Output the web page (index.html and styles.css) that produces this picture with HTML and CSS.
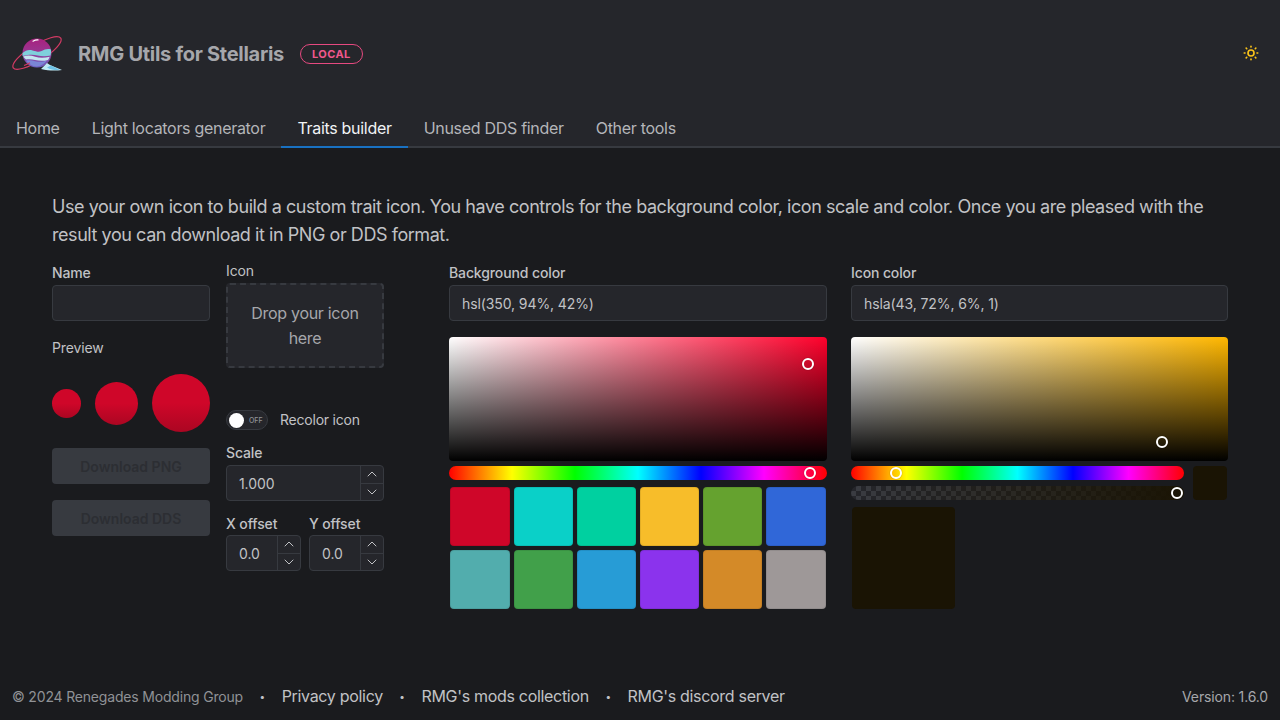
FILE: index.html
```html
<!DOCTYPE html>
<html lang="en">
<head>
    <meta charset="UTF-8">
    <meta name="viewport" content="width=device-width, initial-scale=1.0">
    <title>RMG Utils for Stellaris</title>
    <link rel="stylesheet" href="styles.css">
</head>
<body>
    <header class="header">
        <div class="brand-row">
            <div class="brand">
                <svg class="logo" width="52" height="36" viewBox="0 0 52 36" fill="none">
                    <defs>
                        <linearGradient id="planet" x1="0" y1="0" x2="0" y2="1">
                            <stop offset="0" stop-color="#a8217f"/>
                            <stop offset="0.45" stop-color="#9a3590"/>
                            <stop offset="1" stop-color="#6d62c4"/>
                        </linearGradient>
                    </defs>
                    <ellipse cx="25" cy="17" rx="28" ry="8" transform="rotate(-32 25 17)" stroke="#d43a64" stroke-width="1.200"/>
                    <circle cx="25" cy="17" r="14.500" fill="url(#planet)"/>
                    <path d="M10.600 17c3-2.500 6-3.500 10-2.500s6 2 9 .5 6-2.500 9.300-1.500c.3 2 .2 4-.3 6-4 1-9 1-13 0s-9-1-15 .5c-.2-1-.1-2 0-3z" fill="#7fd0dc"/>
                    <path d="M11.200 20.500c4-1.500 8-1 12 .2s9 1.300 14.500 0c-.4 1.200-1 2.300-1.700 3.300-4 1.200-9 1-13 0-3-.8-6-1-9-.5-1-1-2.200-1.800-2.800-3z" fill="#c4e6f0"/>
                    <path d="M14 24.800c3-.8 6-.4 9 .4s8 1 12-.6c-2.500 3-6 5.900-10.500 5.900-4 0-8-2.500-10.500-5.700z" fill="#7a86d6"/>
                    <path d="M21 5.200c1.500-.9 3.500-1.400 5-1.300" stroke="#fff" stroke-width="1.200" stroke-linecap="round"/>
                    <path d="M12 29.500c2-.8 4.500-2 6-2.800" stroke="#d43a64" stroke-width="1.200"/>
                    <path d="M29 33l6-6 3 2 12 5c-6 .8-13 1-21-1z" fill="#bfeaf5"/>
                    <path d="M35 31.500l4-2 9 4.500c-4 .3-9 0-13-2.500z" fill="#6fc3e6"/>
                </svg>
                <span class="title">RMG Utils for Stellaris</span>
                <span class="badge">Local</span>
            </div>
            <svg class="theme-icon" width="18" height="18" viewBox="0 0 24 24" fill="none" stroke="#fcc419" stroke-width="2.200" stroke-linecap="round" stroke-linejoin="round">
                <circle cx="12" cy="12" r="4"/>
                <path d="M3 12h1m8 -9v1m8 8h1m-9 8v1m-6.400 -15.400l.7 .7m12.100 -.7l-.7 .7m0 11.400l.7 .7m-12.100 -.7l-.7 .7"/>
            </svg>
        </div>
        <nav class="tabs">
            <a class="tab">Home</a>
            <a class="tab">Light locators generator</a>
            <a class="tab active">Traits builder</a>
            <a class="tab">Unused DDS finder</a>
            <a class="tab">Other tools</a>
        </nav>
    </header>

    <main class="main">
        <p class="intro">Use your own icon to build a custom trait icon. You have controls for the background color, icon scale and color. Once you are pleased with the result you can download it in PNG or DDS format.</p>

        <div class="builder">
            <div class="col col-left">
                <label class="label">Name</label>
                <input class="input" type="text">
                <div class="label label-plain preview-label">Preview</div>
                <div class="preview">
                    <div class="dot dot-s"></div>
                    <div class="dot dot-m"></div>
                    <div class="dot dot-l"></div>
                </div>
                <button class="btn" disabled>Download PNG</button>
                <button class="btn" disabled>Download DDS</button>
            </div>

            <div class="col col-icon">
                <label class="label label-plain">Icon</label>
                <div class="dropzone">Drop your icon here</div>
                <div class="switch-row">
                    <div class="switch"><span class="knob"></span><span class="switch-text">OFF</span></div>
                    <span class="switch-label">Recolor icon</span>
                </div>
                <label class="label scale-label">Scale</label>
                <div class="number">
                    <input class="number-input" type="text" value="1.000">
                    <div class="stepper">
                        <span class="step"><svg width="16" height="16" viewBox="0 0 24 24" class="chev"><path d="M6 15l6-6 6 6"/></svg></span>
                        <span class="step"><svg width="16" height="16" viewBox="0 0 24 24" class="chev"><path d="M6 9l6 6 6-6"/></svg></span>
                    </div>
                </div>
                <div class="offsets">
                    <div class="offset">
                        <label class="label">X offset</label>
                        <div class="number">
                            <input class="number-input" type="text" value="0.0">
                            <div class="stepper">
                                <span class="step"><svg width="16" height="16" viewBox="0 0 24 24" class="chev"><path d="M6 15l6-6 6 6"/></svg></span>
                                <span class="step"><svg width="16" height="16" viewBox="0 0 24 24" class="chev"><path d="M6 9l6 6 6-6"/></svg></span>
                            </div>
                        </div>
                    </div>
                    <div class="offset">
                        <label class="label">Y offset</label>
                        <div class="number">
                            <input class="number-input" type="text" value="0.0">
                            <div class="stepper">
                                <span class="step"><svg width="16" height="16" viewBox="0 0 24 24" class="chev"><path d="M6 15l6-6 6 6"/></svg></span>
                                <span class="step"><svg width="16" height="16" viewBox="0 0 24 24" class="chev"><path d="M6 9l6 6 6-6"/></svg></span>
                            </div>
                        </div>
                    </div>
                </div>
            </div>

            <div class="col col-color">
                <label class="label">Background color</label>
                <input class="input" type="text" value="hsl(350, 94%, 42%)">
                <div class="saturation sat-red"><span class="thumb thumb-bg-sat"></span></div>
                <div class="hue"><span class="thumb thumb-bg-hue"></span></div>
                <div class="swatches">
                    <div class="swatch s1"></div>
                    <div class="swatch s2"></div>
                    <div class="swatch s3"></div>
                    <div class="swatch s4"></div>
                    <div class="swatch s5"></div>
                    <div class="swatch s6"></div>
                    <div class="swatch s7"></div>
                    <div class="swatch s8"></div>
                    <div class="swatch s9"></div>
                    <div class="swatch s10"></div>
                    <div class="swatch s11"></div>
                    <div class="swatch s12"></div>
                </div>
            </div>

            <div class="col col-color">
                <label class="label">Icon color</label>
                <input class="input" type="text" value="hsla(43, 72%, 6%, 1)">
                <div class="saturation sat-gold"><span class="thumb thumb-icon-sat"></span></div>
                <div class="slider-row">
                    <div class="sliders">
                        <div class="hue"><span class="thumb thumb-icon-hue"></span></div>
                        <div class="alpha"><span class="thumb thumb-icon-alpha"></span></div>
                    </div>
                    <div class="current"></div>
                </div>
                <div class="icon-swatch"></div>
            </div>
        </div>
    </main>

    <footer class="footer">
        <div class="footer-links">
            <span class="copy">© 2024 Renegades Modding Group</span>
            <span class="sep">•</span>
            <a class="link">Privacy policy</a>
            <span class="sep">•</span>
            <a class="link">RMG's mods collection</a>
            <span class="sep">•</span>
            <a class="link">RMG's discord server</a>
        </div>
        <span class="version">Version: 1.6.0</span>
    </footer>
</body>
</html>
```

FILE: styles.css
```css
* {
    box-sizing: border-box;
}
body {
    font-family: Inter, "Liberation Sans", sans-serif;
    background-color: #1a1b1e;
    color: #c1c2c5;
    display: flex;
    flex-direction: column;
    height: 100vh;
    margin: 0;
    overflow: hidden;
}

/* header */
.header {
    background-color: #25262b;
    height: 148px;
    flex-shrink: 0;
    display: flex;
    flex-direction: column;
    justify-content: space-between;
}
.brand-row {
    display: flex;
    justify-content: space-between;
    align-items: center;
    padding: 36px 20px 0 12px;
}
.brand {
    display: flex;
    align-items: center;
}
.logo {
    margin-right: 14px;
}
.theme-icon {
    margin-bottom: 2px;
}
.title {
    font-size: 20px;
    font-weight: 700;
    letter-spacing: -0.28px;
    color: #a6a7ab;
}
.badge {
    margin-left: 16px;
    height: 20px;
    padding: 0 11px;
    display: flex;
    align-items: center;
    border: 1px solid #e64980;
    border-radius: 20px;
    color: #f0588c;
    font-size: 11px;
    font-weight: 700;
    letter-spacing: 0.4px;
    text-transform: uppercase;
}
.tabs {
    display: flex;
    border-bottom: 2px solid #373a40;
}
.tab {
    padding: 0 16px;
    height: 38px;
    margin-bottom: -2px;
    font-size: 16px;
    line-height: 36px;
    letter-spacing: -0.3px;
    color: #b4b5b9;
    border-bottom: 2px solid transparent;
}
.tab.active {
    color: #f1f3f5;
    border-bottom-color: #1971c2;
}

/* main */
.main {
    flex: 1;
    padding: 45px 52px 0;
}
.intro {
    margin: 0 0 11px;
    font-size: 18px;
    line-height: 28px;
    letter-spacing: -0.44px;
}
.builder {
    display: flex;
}
.col {
    display: flex;
    flex-direction: column;
}
.col-left {
    width: 158px;
    padding-top: 2px;
}
.col-icon {
    width: 158px;
    margin-left: 16px;
}
.col-color {
    width: 378px;
    margin-left: 24px;
    padding-top: 2px;
}
.col-icon + .col-color {
    margin-left: 65px;
}
.label {
    font-size: 14px;
    line-height: 22px;
    font-weight: 450;
    letter-spacing: -0.12px;
    margin-bottom: 1px;
}
.label-plain {
    font-weight: 400;
}
.input {
    height: 36px;
    width: 100%;
    padding: 0 12px;
    background-color: #25262b;
    border: 1px solid #373a40;
    border-radius: 4px;
    color: #c1c2c5;
    font-family: inherit;
    font-size: 14px;
    letter-spacing: -0.1px;
}
.preview-label {
    margin-top: 16px;
}
.preview {
    display: flex;
    align-items: center;
    gap: 14px;
    margin-top: 14px;
    height: 58px;
}
.dot {
    border-radius: 50%;
    background: linear-gradient(180deg, #cf0629 50%, #ab0622 100%);
}
.dot-s {
    width: 29px;
    height: 29px;
}
.dot-m {
    width: 43px;
    height: 43px;
}
.dot-l {
    width: 58px;
    height: 58px;
}
.btn {
    height: 36px;
    margin-top: 16px;
    background-color: #373a40;
    color: #2c2e33;
    border: none;
    border-radius: 4px;
    font-family: inherit;
    font-size: 14px;
    font-weight: 600;
}

.dropzone {
    height: 85px;
    padding: 0 16px;
    display: flex;
    align-items: center;
    justify-content: center;
    text-align: center;
    background-color: #25262b;
    border: 2px dashed #373a40;
    border-radius: 4px;
    font-size: 16px;
    line-height: 25px;
    letter-spacing: -0.3px;
    color: #a6a7ab;
}
.switch-row {
    display: flex;
    align-items: center;
    height: 20px;
    margin-top: 42px;
}
.switch {
    width: 42px;
    height: 20px;
    display: flex;
    align-items: center;
    padding-left: 2px;
    background-color: #25262b;
    border: 1px solid #373a40;
    border-radius: 20px;
}
.knob {
    width: 15px;
    height: 15px;
    border-radius: 50%;
    background-color: #fff;
}
.switch-text {
    margin-left: 5px;
    font-size: 7px;
    font-weight: 500;
    color: #909296;
}
.switch-label {
    margin-left: 12px;
    font-size: 14px;
    line-height: 18px;
    letter-spacing: -0.22px;
    padding-bottom: 1px;
}
.scale-label {
    margin-top: 12px;
}
.number {
    height: 36px;
    display: flex;
    background-color: #25262b;
    border: 1px solid #373a40;
    border-radius: 4px;
}
.number-input {
    flex: 1;
    min-width: 0;
    padding: 0 12px;
    background: none;
    border: none;
    color: #c1c2c5;
    font-family: inherit;
    font-size: 14px;
    letter-spacing: -0.1px;
}
.stepper {
    width: 23px;
    flex-shrink: 0;
    display: flex;
    flex-direction: column;
    border-left: 1px solid #373a40;
}
.step {
    flex: 1;
    display: flex;
    align-items: center;
    justify-content: center;
}
.step + .step {
    border-top: 1px solid #373a40;
}
.chev {
    fill: none;
    stroke: #c1c2c5;
    stroke-width: 1.500;
    stroke-linecap: round;
    stroke-linejoin: round;
}
.offsets {
    display: flex;
    gap: 8px;
    margin-top: 12px;
}
.offset {
    width: 75px;
}

/* color pickers */
.saturation {
    position: relative;
    height: 124px;
    margin-top: 16px;
    border-radius: 4px;
}
.sat-red {
    background: linear-gradient(180deg, transparent, #000), linear-gradient(90deg, #fff, #ff002b);
}
.sat-gold {
    background: linear-gradient(180deg, transparent, #000), linear-gradient(90deg, #fff, #ffb700);
}
.hue {
    position: relative;
    height: 14px;
    border-radius: 7px;
    background: linear-gradient(90deg, #f00, #ff0 16.66%, #0f0 33.33%, #0ff 50%, #00f 66.66%, #f0f 83.33%, #f00);
}
.col-color > .hue {
    margin-top: 5px;
}
.thumb {
    position: absolute;
    width: 12px;
    height: 12px;
    margin: -6px 0 0 -6px;
    border: 2px solid #fff;
    border-radius: 50%;
    box-shadow: 0 0 1px rgba(0, 0, 0, 0.6);
}
.thumb-bg-sat {
    left: 359px;
    top: 27px;
}
.thumb-bg-hue {
    left: 361px;
    top: 7px;
}
.thumb-icon-sat {
    left: 311px;
    top: 105px;
}
.thumb-icon-hue {
    left: 45px;
    top: 7px;
}
.thumb-icon-alpha {
    left: 326px;
    top: 7px;
}
.swatches {
    display: grid;
    grid-template-columns: 60px repeat(4, 59px) 60px;
    gap: 4px;
    margin-top: 7px;
    padding: 0 1px;
}
.swatch {
    height: 59px;
    border-radius: 4px;
    box-shadow: inset 0 0 0 1px rgba(0, 0, 0, 0.08);
}
.s1 { background-color: #cf0629; }
.s2 { background-color: #0ad0c8; }
.s3 { background-color: #00d0a0; }
.s4 { background-color: #f7bd2a; }
.s5 { background-color: #65a22f; }
.s6 { background-color: #3067d8; }
.s7 { background-color: #52adad; }
.s8 { background-color: #41a04a; }
.s9 { background-color: #279cd6; }
.s10 { background-color: #8b33ed; }
.s11 { background-color: #d48a28; }
.s12 { background-color: #9e9898; }

.slider-row {
    display: flex;
    justify-content: space-between;
    margin-top: 5px;
}
.sliders {
    width: 333px;
    display: flex;
    flex-direction: column;
    gap: 6px;
}
.alpha {
    position: relative;
    height: 14px;
    border-radius: 7px;
    background:
        linear-gradient(90deg, rgba(26, 20, 4, 0), #1a1404),
        repeating-conic-gradient(#3a3c42 0 25%, #25262b 0 50%) 0 0 / 10px 10px;
}
.current {
    width: 34px;
    height: 34px;
    margin-right: 1px;
    background-color: #1a1404;
    border-radius: 4px;
}
.icon-swatch {
    width: 103px;
    height: 102px;
    margin: 7px 0 0 1px;
    background-color: #1a1404;
    border-radius: 4px;
}

/* footer */
.footer {
    height: 48px;
    flex-shrink: 0;
    padding: 0 12px;
    display: flex;
    align-items: center;
    justify-content: space-between;
}
.footer-links {
    display: flex;
    align-items: center;
}
.copy, .version {
    font-size: 14px;
    letter-spacing: -0.18px;
    color: #909296;
}
.version {
    letter-spacing: -0.14px;
    color: #a6a7ab;
}
.sep {
    font-size: 10px;
    margin: 0 16.5px;
}
.link {
    font-size: 16px;
    letter-spacing: -0.31px;
}
```
